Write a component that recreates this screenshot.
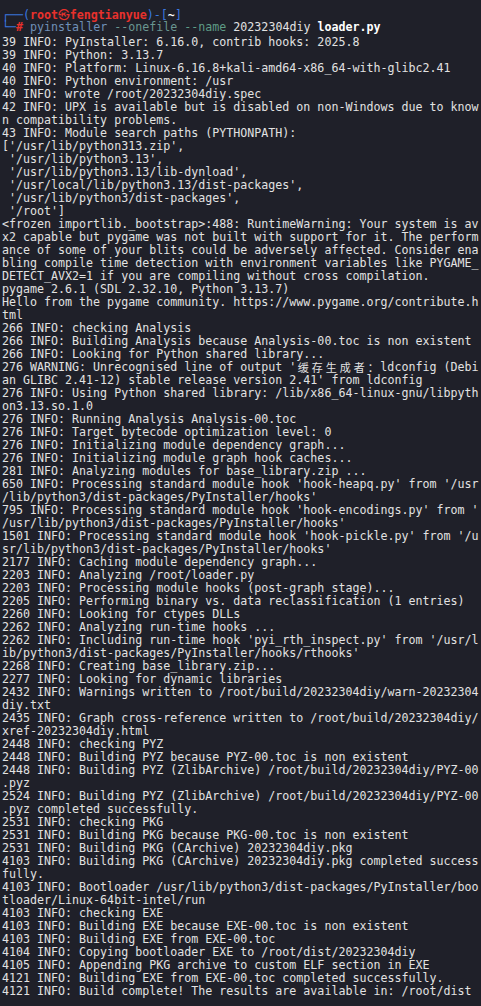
const lines = [
  "39 INFO: PyInstaller: 6.16.0, contrib hooks: 2025.8",
  "39 INFO: Python: 3.13.7",
  "40 INFO: Platform: Linux-6.16.8+kali-amd64-x86_64-with-glibc2.41",
  "40 INFO: Python environment: /usr",
  "40 INFO: wrote /root/20232304diy.spec",
  "42 INFO: UPX is available but is disabled on non-Windows due to know",
  "n compatibility problems.",
  "43 INFO: Module search paths (PYTHONPATH):",
  "['/usr/lib/python313.zip',",
  " '/usr/lib/python3.13',",
  " '/usr/lib/python3.13/lib-dynload',",
  " '/usr/local/lib/python3.13/dist-packages',",
  " '/usr/lib/python3/dist-packages',",
  " '/root']",
  "<frozen importlib._bootstrap>:488: RuntimeWarning: Your system is av",
  "x2 capable but pygame was not built with support for it. The perform",
  "ance of some of your blits could be adversely affected. Consider ena",
  "bling compile time detection with environment variables like PYGAME_",
  "DETECT_AVX2=1 if you are compiling without cross compilation.",
  "pygame 2.6.1 (SDL 2.32.10, Python 3.13.7)",
  "Hello from the pygame community. https://www.pygame.org/contribute.h",
  "tml",
  "266 INFO: checking Analysis",
  "266 INFO: Building Analysis because Analysis-00.toc is non existent",
  "266 INFO: Looking for Python shared library...",
  "CJK",
  "an GLIBC 2.41-12) stable release version 2.41' from ldconfig",
  "276 INFO: Using Python shared library: /lib/x86_64-linux-gnu/libpyth",
  "on3.13.so.1.0",
  "276 INFO: Running Analysis Analysis-00.toc",
  "276 INFO: Target bytecode optimization level: 0",
  "276 INFO: Initializing module dependency graph...",
  "276 INFO: Initializing module graph hook caches...",
  "281 INFO: Analyzing modules for base_library.zip ...",
  "650 INFO: Processing standard module hook 'hook-heapq.py' from '/usr",
  "/lib/python3/dist-packages/PyInstaller/hooks'",
  "795 INFO: Processing standard module hook 'hook-encodings.py' from '",
  "/usr/lib/python3/dist-packages/PyInstaller/hooks'",
  "1501 INFO: Processing standard module hook 'hook-pickle.py' from '/u",
  "sr/lib/python3/dist-packages/PyInstaller/hooks'",
  "2177 INFO: Caching module dependency graph...",
  "2203 INFO: Analyzing /root/loader.py",
  "2203 INFO: Processing module hooks (post-graph stage)...",
  "2205 INFO: Performing binary vs. data reclassification (1 entries)",
  "2260 INFO: Looking for ctypes DLLs",
  "2262 INFO: Analyzing run-time hooks ...",
  "2262 INFO: Including run-time hook 'pyi_rth_inspect.py' from '/usr/l",
  "ib/python3/dist-packages/PyInstaller/hooks/rthooks'",
  "2268 INFO: Creating base_library.zip...",
  "2277 INFO: Looking for dynamic libraries",
  "2432 INFO: Warnings written to /root/build/20232304diy/warn-20232304",
  "diy.txt",
  "2435 INFO: Graph cross-reference written to /root/build/20232304diy/",
  "xref-20232304diy.html",
  "2448 INFO: checking PYZ",
  "2448 INFO: Building PYZ because PYZ-00.toc is non existent",
  "2448 INFO: Building PYZ (ZlibArchive) /root/build/20232304diy/PYZ-00",
  ".pyz",
  "2524 INFO: Building PYZ (ZlibArchive) /root/build/20232304diy/PYZ-00",
  ".pyz completed successfully.",
  "2531 INFO: checking PKG",
  "2531 INFO: Building PKG because PKG-00.toc is non existent",
  "2531 INFO: Building PKG (CArchive) 20232304diy.pkg",
  "4103 INFO: Building PKG (CArchive) 20232304diy.pkg completed success",
  "fully.",
  "4103 INFO: Bootloader /usr/lib/python3/dist-packages/PyInstaller/boo",
  "tloader/Linux-64bit-intel/run",
  "4103 INFO: checking EXE",
  "4103 INFO: Building EXE because EXE-00.toc is non existent",
  "4103 INFO: Building EXE from EXE-00.toc",
  "4104 INFO: Copying bootloader EXE to /root/dist/20232304diy",
  "4105 INFO: Appending PKG archive to custom ELF section in EXE",
  "4121 INFO: Building EXE from EXE-00.toc completed successfully.",
  "4121 INFO: Build complete! The results are available in: /root/dist",
]

const cjk = ["缓", "存", "生", "成", "者", "："]

function WarningLine() {
  return (
    <div className="h-[13px] whitespace-pre">
      {"276 WARNING: Unrecognised line of output '"}
      {cjk.map((c) => (
        <span
          key={c}
          className="inline-block h-[13px] w-[14px] text-center align-top text-[11px] leading-[13px] [font-family:'Noto_Sans_CJK_SC',sans-serif]"
        >
          {c}
        </span>
      ))}
      {"ldconfig (Debi"}
    </div>
  )
}

export default function App() {
  return (
    <div className="min-h-[1006px] w-[481px] overflow-hidden bg-[#1f2029] pl-[2px] pt-[7px] text-[11.65px] leading-[13px] text-[#e2e2e2] [font-family:'DejaVu_Sans_Mono','Noto_Sans_CJK_SC',monospace]">
      <div className="h-[14px] whitespace-pre">
        <span className="text-[#3a78e0]">┌──(</span>
        <span className="font-bold text-[#e8312c]">root</span>
        <span className="text-[#e8312c] [font-family:'Noto_Sans_CJK_SC',sans-serif]">㉿</span>
        <span className="font-bold text-[#e8312c]">fengtianyue</span>
        <span className="text-[#3a78e0]">)-[</span>
        <span className="font-bold text-white">~</span>
        <span className="text-[#3a78e0]">]</span>
      </div>
      <div className="h-[15px] whitespace-pre">
        <span className="text-[#3a78e0]">└─</span>
        <span className="font-bold text-[#e8312c]">#</span>
        <span> </span>
        <span className="text-[#6f90b8]">pyinstaller</span>
        <span> </span>
        <span className="text-[#6a9690]">--onefile</span>
        <span> </span>
        <span className="text-[#5e9c86]">--name</span>
        <span> 20232304diy </span>
        <span className="font-bold text-white">loader.py</span>
      </div>
      {lines.map((l, i) =>
        l === "CJK" ? (
          <WarningLine key={i} />
        ) : (
          <div key={i} className="h-[13px] whitespace-pre">
            {l}
          </div>
        )
      )}
    </div>
  )
}
